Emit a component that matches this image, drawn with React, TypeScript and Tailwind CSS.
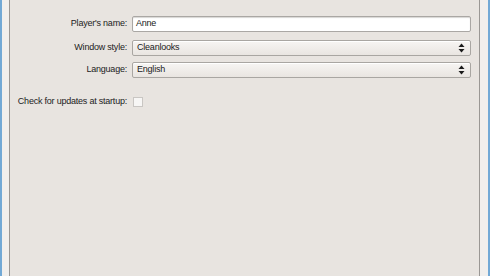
const Spinner = () => (
  <svg width="7" height="10" viewBox="0 0 7 10" className="shrink-0">
    <path d="M3.5 0.5 L6.5 4 L0.5 4 Z" fill="#1a1a1a" />
    <path d="M3.5 9.5 L6.5 6 L0.5 6 Z" fill="#1a1a1a" />
  </svg>
);

const Row = ({ label, children }: { label: string; children: React.ReactNode }) => (
  <div className="flex items-center h-[16px]">
    <div className="w-[118px] shrink-0 text-right pr-px">{label}</div>
    <div className="flex-1 ml-[4px] h-full">{children}</div>
  </div>
);

const Combo = ({ value }: { value: string }) => (
  <div className="h-full flex items-center justify-between pl-[4px] pr-[5px] border border-[#a9a6a2] rounded-[2px] bg-gradient-to-b from-[#f7f5f3] to-[#e9e5e1] shadow-[inset_0_1px_0_#ffffff]">
    <span>{value}</span>
    <Spinner />
  </div>
);

export default function App() {
  return (
    <div
      className="flex w-[490px] h-[276px] bg-[#e8e4e0] text-[9px] text-[#222] overflow-hidden"
      style={{ fontFamily: '"Liberation Sans", Arial, sans-serif' }}
    >
      {/* left frame */}
      <div className="w-[2px] bg-[#72a9d6]" />
      <div className="w-[7px] bg-[#f1efed]" />
      <div className="w-px bg-[#9a9794]" />

      <div className="flex-1 flex flex-col pt-[16px] pr-[8px] tracking-[-0.22px]">
        <Row label="Player's name:">
          <div className="h-full flex items-center pl-[3px] bg-white border border-[#aaa7a4] rounded-[2px] shadow-[inset_0_1px_1px_#d8d6d4]">
            Anne
          </div>
        </Row>
        <div className="h-[8px]" />
        <Row label="Window style:">
          <Combo value="Cleanlooks" />
        </Row>
        <div className="h-[6px]" />
        <Row label="Language:">
          <Combo value="English" />
        </Row>
        <div className="h-[18px]" />
        <div className="flex items-center h-[12px]">
          <div className="w-[118px] shrink-0 text-right pr-px">Check for updates at startup:</div>
          <div className="ml-[5px] w-[10px] h-[10px] bg-[#f7f6f5] border border-[#c9c6c3]" />
        </div>
      </div>

      {/* right frame */}
      <div className="w-px bg-[#9a9794]" />
      <div className="w-[8px] bg-[#f1efed]" />
      <div className="w-[2px] bg-[#72a9d6]" />
    </div>
  );
}
